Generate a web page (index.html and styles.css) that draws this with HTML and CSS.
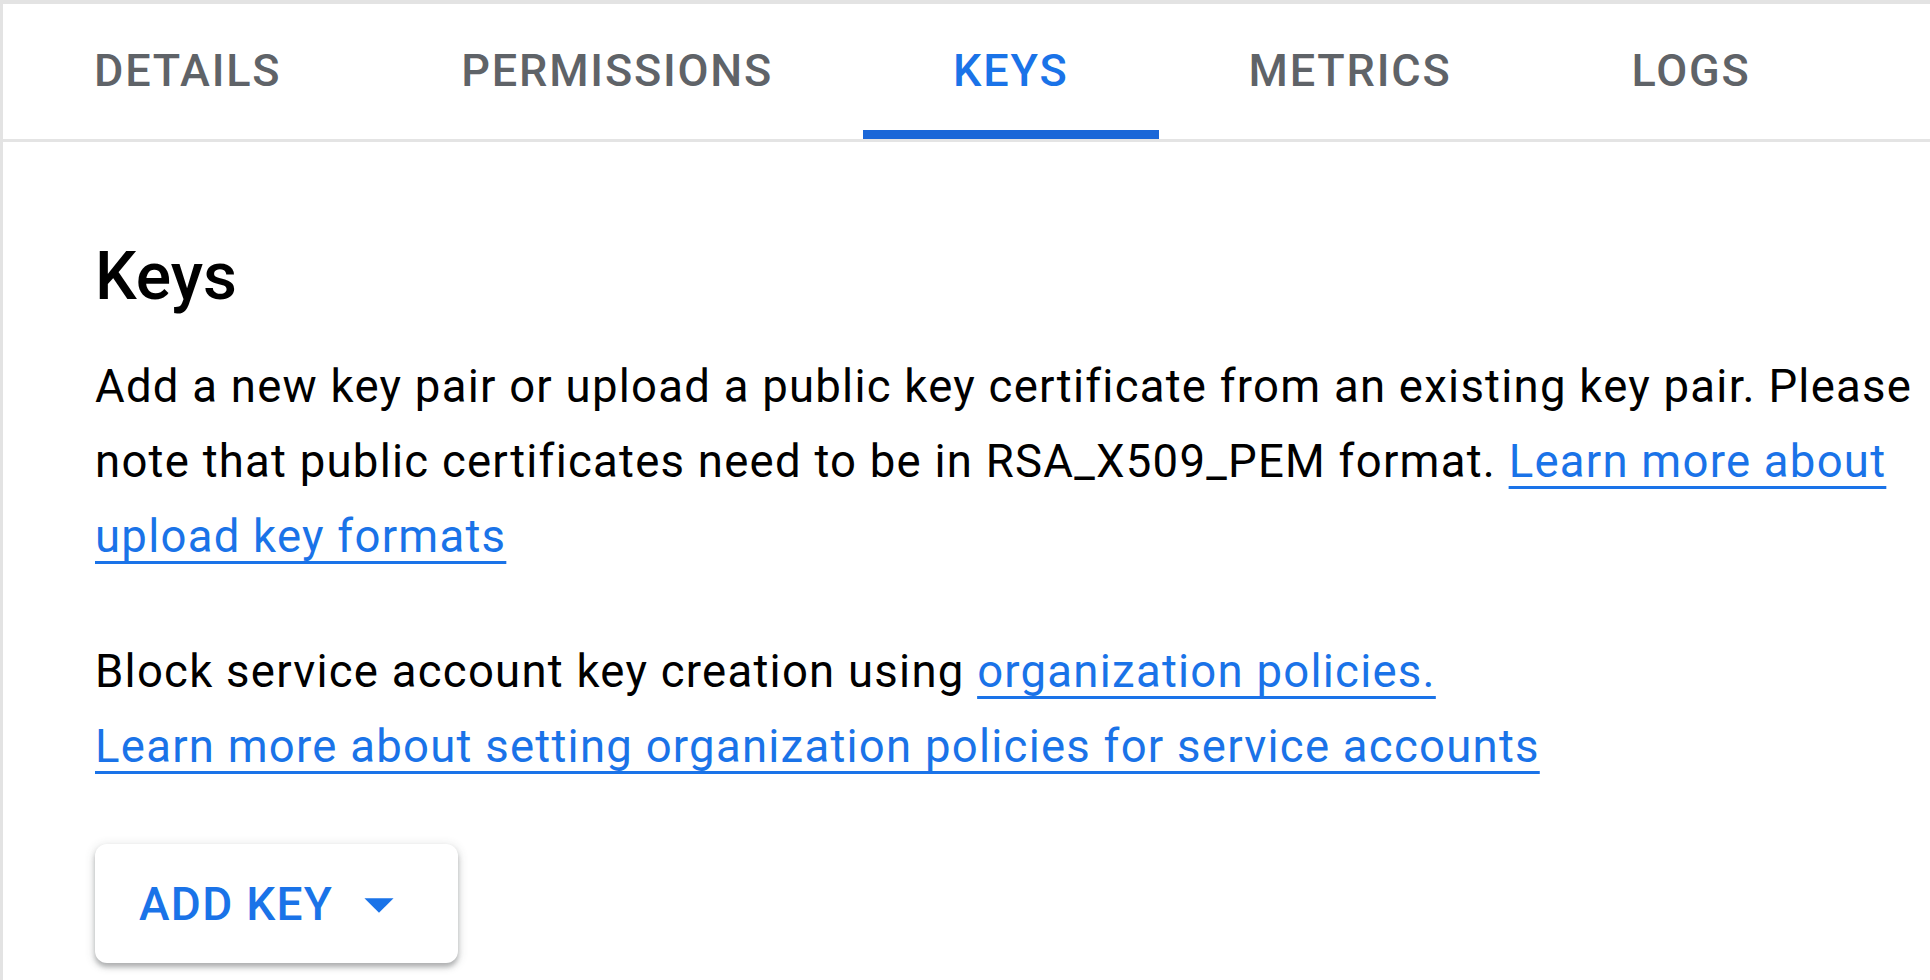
FILE: index.html
```html
<!DOCTYPE html>
<html lang="en">
<head>
<meta charset="utf-8">
<title>Service account keys</title>
<link rel="stylesheet" href="styles.css">
</head>
<body>
<div class="frame">
  <nav class="tabs">
    <a class="tab">DETAILS</a>
    <a class="tab">PERMISSIONS</a>
    <a class="tab active">KEYS</a>
    <a class="tab">METRICS</a>
    <a class="tab">LOGS</a>
  </nav>
  <main class="content">
    <h2 class="title">Keys</h2>
    <p class="para">Add a new key pair or upload a public key certificate from an existing key pair. Please note that public certificates need to be in RSA_X509_PEM format. <a class="link">Learn more about upload key formats</a></p>
    <p class="para">Block service account key creation using <a class="link">organization policies.</a><br><a class="link">Learn more about setting organization policies for service accounts</a></p>
    <button class="btn">
      <span class="btn-label">ADD KEY</span>
      <svg class="btn-icon" viewBox="0 0 24 24" aria-hidden="true"><path d="M7 10l5 5 5-5z"/></svg>
    </button>
  </main>
</div>
</body>
</html>
```

FILE: styles.css
```css
* { box-sizing: border-box; }
html, body {
  margin: 0;
  padding: 0;
  background: #ffffff;
}
body {
  font-family: Roboto, "Liberation Sans", sans-serif;
  color: #202124;
  overflow: hidden;
}
.frame {
  width: 1930px;
  height: 980px;
  border-top: 4px solid #e3e3e3;
  border-left: 3px solid #e3e3e3;
  background: #fff;
}
.tabs {
  display: flex;
  height: 138px;
  padding-left: 1px;
  border-bottom: 3px solid #e4e4e4;
}
.tab {
  display: flex;
  align-items: center;
  justify-content: center;
  padding: 0 90px 3px;
  font-size: 45px;
  font-weight: 500;
  letter-spacing: 1.8px;
  color: #5f6368;
  position: relative;
  cursor: pointer;
}
.tab.active {
  color: #1a73e8;
}
.tab.active::after {
  content: "";
  position: absolute;
  left: 0;
  right: 0;
  bottom: 0;
  height: 9px;
  background: #1a67d8;
}
.content {
  padding: 95px 0 0 92px;
}
.title {
  margin: 0;
  font-size: 66px;
  font-weight: 500;
  line-height: 80px;
  color: #000;
}
.para {
  margin: 32px 0 0;
  font-size: 45.5px;
  line-height: 75px;
  letter-spacing: 1.25px;
  color: #000;
}
.para + .para {
  margin-top: 60px;
}
.link {
  color: #1a73e8;
  text-decoration: underline;
  text-decoration-thickness: 3px;
  text-underline-offset: 9px;
  text-decoration-skip-ink: none;
  cursor: pointer;
}
.btn {
  margin-top: 60px;
  display: flex;
  align-items: center;
  height: 119px;
  padding: 0 44px 0 44px;
  border: none;
  border-radius: 12px;
  background: #fff;
  box-shadow: 0 4px 5px rgba(60, 64, 67, 0.35), 0 2px 10px 2px rgba(60, 64, 67, 0.12);
  font-family: Roboto, "Liberation Sans", sans-serif;
  font-size: 46px;
  font-weight: 500;
  letter-spacing: 1.3px;
  color: #1a73e8;
  cursor: pointer;
}
.btn-label {
  line-height: 1;
}
.btn-icon {
  width: 70px;
  height: 70px;
  margin-left: 11px;
  fill: #1a73e8;
}
```
